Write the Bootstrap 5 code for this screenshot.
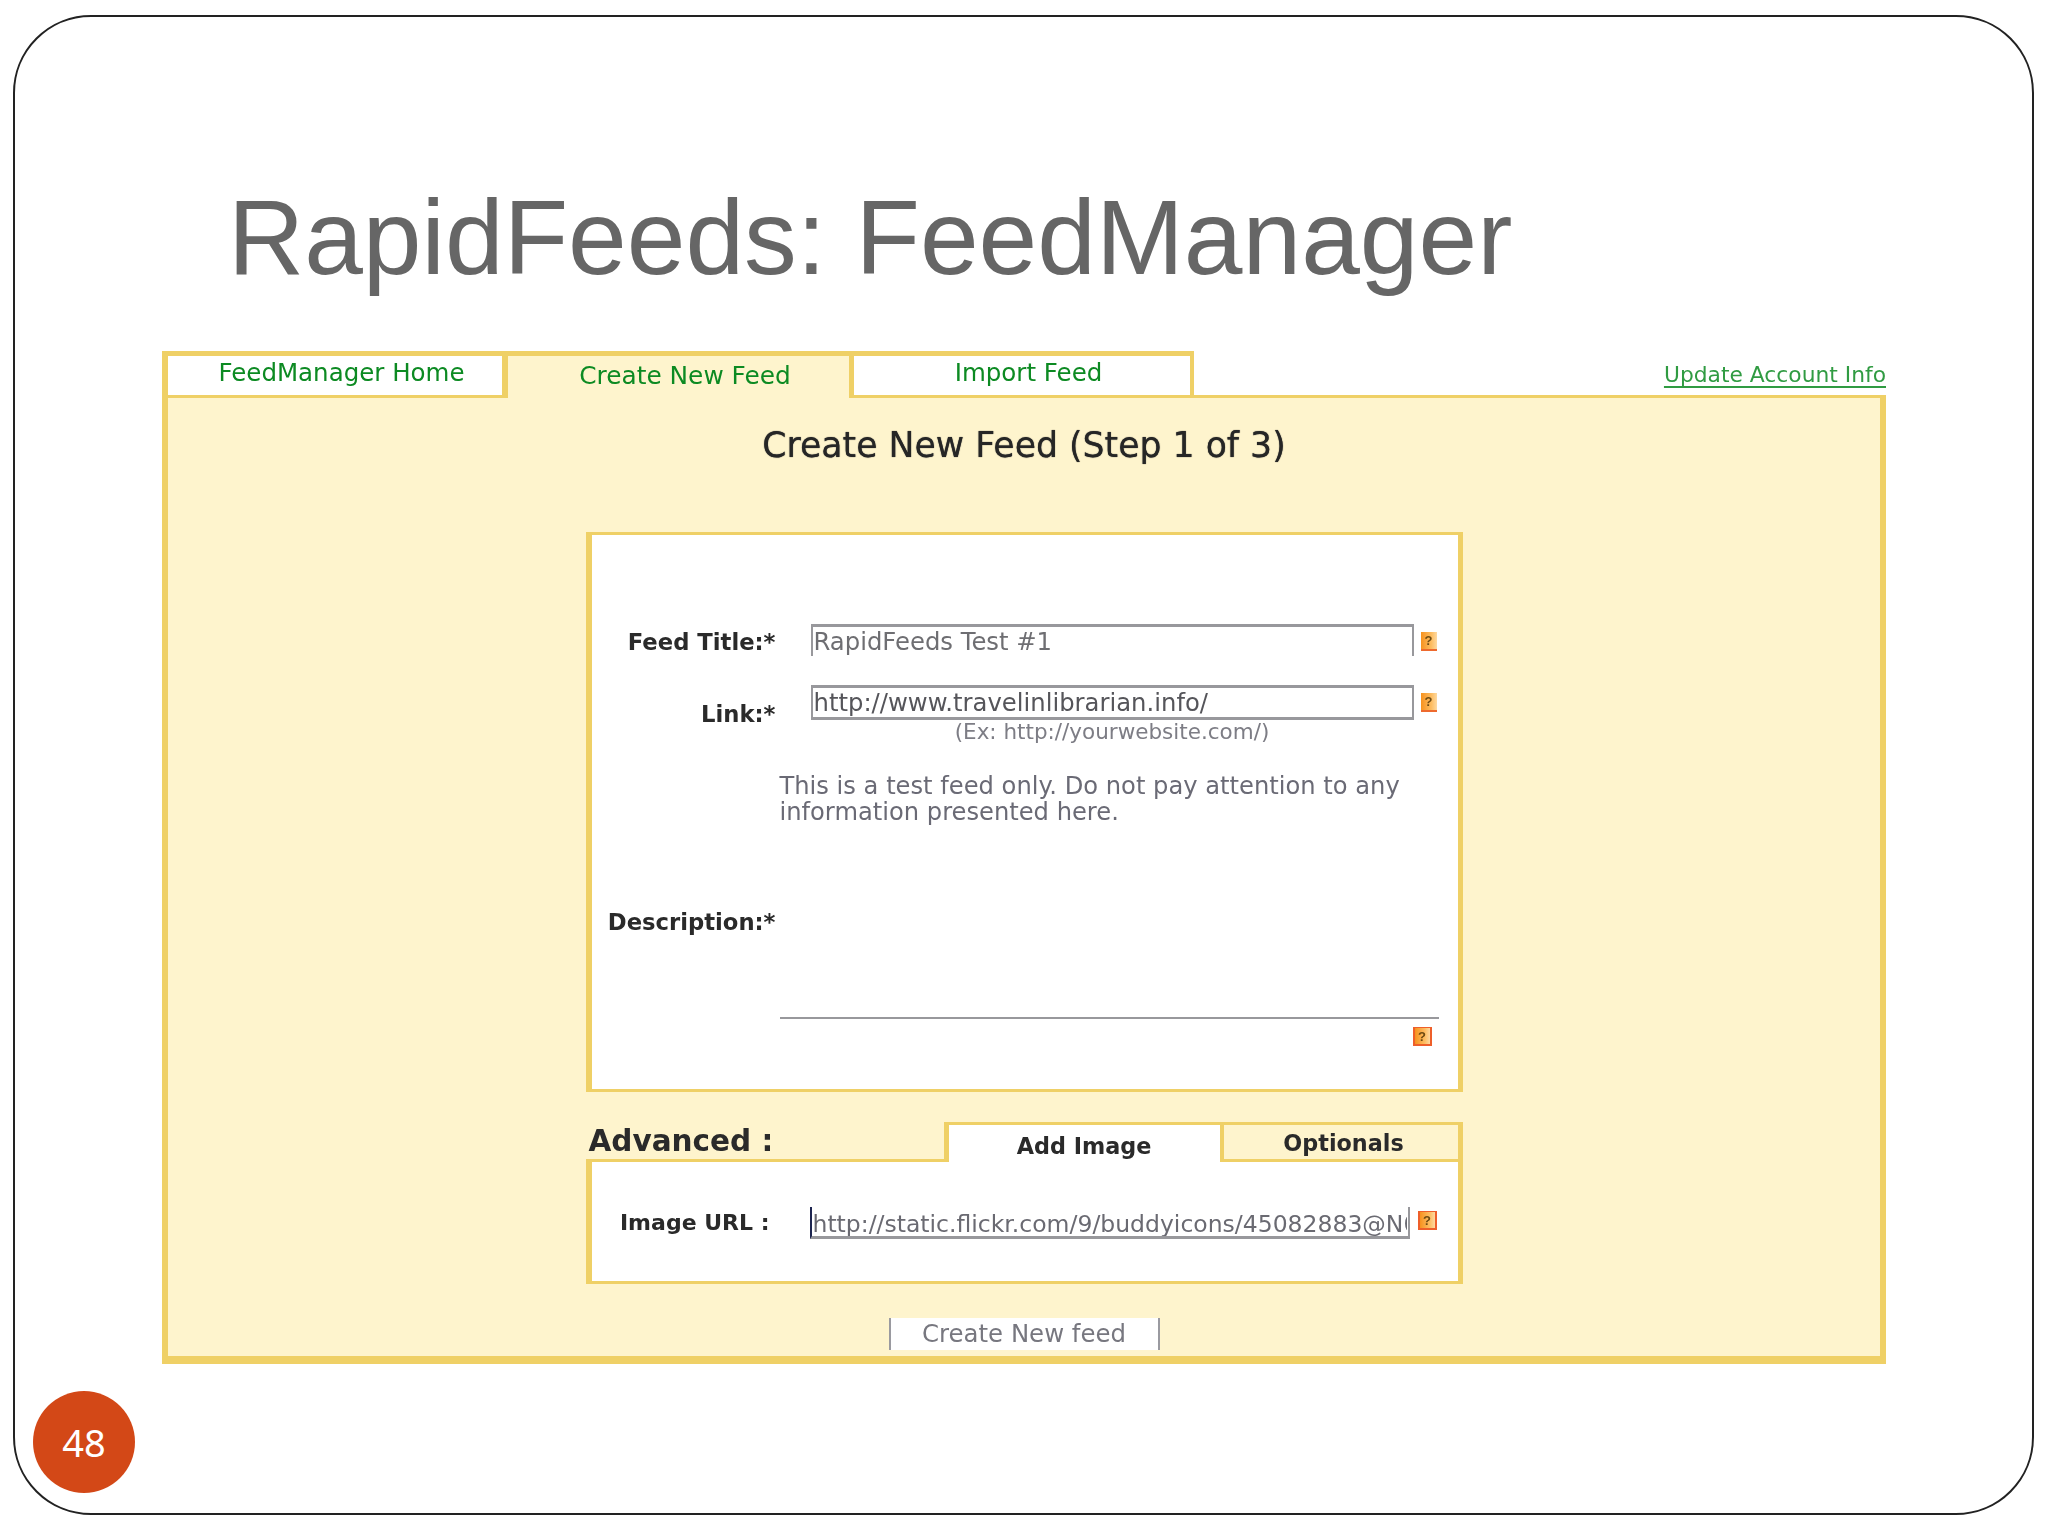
<!DOCTYPE html>
<html lang="en">
<head>
<meta charset="utf-8">
<title>RapidFeeds: FeedManager</title>
<link href="https://cdn.jsdelivr.net/npm/bootstrap@5.3.0/dist/css/bootstrap.min.css" rel="stylesheet">
<style>
:root{--gold:#efd066;--cream:#fef4cd;--fld:#98989c;--grn:#0c8a22}
html,body{background:#fff}
body{margin:0;font-family:"DejaVu Sans",sans-serif}
.slide-frame{position:relative;width:2021px;height:1500px;margin:15px 0 0 13px;border:2px solid #222;border-radius:78px;padding-top:160px;background:#fff}
.slide-title{font:400 105.5px/120px "Liberation Sans",sans-serif;color:#666;margin:0 0 54px 213px}
.slide-num{position:absolute;left:18px;bottom:20px;width:102px;height:102px;border-radius:50%;background:#d34817;color:#fff;font:400 38px/1 "Noto Sans",sans-serif}
.shot{width:1724px;margin-left:147px}
.soft{filter:blur(.7px)}
.tabrow{height:47px}
.feed-tab{border:solid var(--gold);border-width:5px 6px 3px;background:#fff;color:var(--grn);font-size:24.5px;line-height:1;padding-top:5px;padding-left:13px;text-align:center}
.feed-tab.t1{width:346px}
.feed-tab.t2{width:341px;font-size:24.8px;background:var(--cream);border-width:5px 0 0;border-bottom:3px solid var(--cream);padding-top:8px}
.feed-tab.t3{width:345px;border-width:5px 4px 3px 5px}
.tab-rest{border-bottom:3px solid var(--gold)}
.acct{color:var(--grn);font-size:21.8px;line-height:1;text-decoration:underline;text-decoration-thickness:2px;text-underline-offset:4px;padding-bottom:9px;opacity:.85}
.panel-body{height:966px;background:var(--cream);border:solid var(--gold);border-width:0 6px 8px;padding-top:27px}
.step-head{font-size:34.7px;line-height:40px;color:#262626;font-weight:400;text-align:center;margin:0 0 67px;text-shadow:0 0 1px #262626}
.inner-w{width:877px}
.main-box{height:560px;background:#fff;border:solid var(--gold);border-width:3px 5px 3px 6px;padding-top:89px}
.lbl{width:184px;text-align:right;font-weight:700;font-size:22.7px;line-height:26px;color:#2a2a2a;flex:none}
.lbl.first{padding-top:5px}
.lbl.second{padding-top:16px}
.lbl.third{padding-top:136px}
.fld{width:603px;height:32px;font:400 24.3px/26px "DejaVu Sans",sans-serif;color:#6e6e72;border:solid var(--fld);border-width:3px 2px 0;border-radius:0;padding:2px 1px;background:#fff;box-shadow:none;flex:none}
.fld.full{height:35px;border-width:3px 2px;color:#55555a}
.fld.url{width:600px;height:32px;font-size:23.5px;border-width:0 2px 3px;border-left-color:#1d2550;padding:4px 1px 0;color:#6a6a72}
.q-ico{display:inline-block;width:16px;height:19px;margin-left:7px;background:linear-gradient(90deg,#f7921e,#fdbd62 65%,#fed9a0);border-bottom:2px solid #ee6a2e;color:#6d4a12;font:700 13px/17px "Liberation Sans",sans-serif;text-align:center;flex:none}
.q-ico.red{width:19px;border:2px solid #ee5f2a;border-width:1px 2px 2px;margin-left:8px}
.two-col{padding-left:31px}
.row-gap{margin-top:29px}
.row-gap2{margin-top:30px}
.hint{font-size:21.5px;line-height:22px;color:#7d7d85;text-align:center;width:603px;margin-top:1px}
.note{font-size:24.2px;line-height:26px;color:#6a6a75;margin:0;width:659px}
.note-col{width:659px}
.rule-line{height:2px;background:var(--fld);margin-top:192px}
.ico-line{padding-right:7px}
.adv-row{height:40px;margin-top:30px}
.adv-head{font-weight:700;font-size:29.5px;line-height:36px;color:#2a2a2a;border-bottom:3px solid var(--gold);padding:1px 0 0 3px}
.sub-tab{font-weight:700;font-size:22.3px;line-height:1;color:#2a2a2a;text-align:center;border:solid var(--gold)}
.sub-tab.on{width:276px;background:#fff;border-width:3px 0 0 5px;padding-top:10px}
.sub-tab.off{width:243px;border-width:3px 5px 3px 4px;padding:7px 0 0 6px}
.adv-box{height:122px;background:#fff;border:solid var(--gold);border-width:0 5px 3px 6px;padding-top:45px}
.lbl-img{width:178px;margin-top:3px;margin-right:40px;font-size:22px;text-align:right;font-weight:700;line-height:26px;color:#2a2a2a;flex:none}
.go-btn{display:block;width:271px;height:32px;margin:34px auto 0;background:#fff;border:solid #9a9aa0;border-width:0 2px;border-radius:0;padding:0;color:#77777f;font:400 24.4px/32px "DejaVu Sans",sans-serif}
.go-btn:hover{background:#fff;color:#77777f;border-color:#9a9aa0}
</style>
</head>
<body>
<div class="slide-frame">
  <h1 class="slide-title">RapidFeeds: FeedManager</h1>

  <div class="shot">
    <div class="tabrow d-flex">
      <div class="feed-tab t1"><span class="soft d-inline-block">FeedManager Home</span></div>
      <div class="feed-tab t2"><span class="soft d-inline-block">Create New Feed</span></div>
      <div class="feed-tab t3"><span class="soft d-inline-block">Import Feed</span></div>
      <div class="tab-rest flex-grow-1 d-flex justify-content-end align-items-end">
        <a class="acct soft" href="#">Update Account Info</a>
      </div>
    </div>

    <div class="panel-body">
      <h2 class="step-head soft">Create New Feed (Step 1 of 3)</h2>

      <div class="inner-w mx-auto">
        <div class="main-box">
          <div class="d-flex">
            <div class="lbl first soft">Feed Title:*</div>
            <div class="d-flex ms-1 two-col">
              <input class="form-control fld soft" value="RapidFeeds Test #1">
              <span class="q-ico soft mt-2">?</span>
            </div>
          </div>
          <div class="d-flex row-gap">
            <div class="lbl second soft">Link:*</div>
            <div class="ms-1 two-col">
              <div class="d-flex">
                <input class="form-control fld full soft" value="http://www.travelinlibrarian.info/">
                <span class="q-ico soft mt-2">?</span>
              </div>
              <div class="hint soft">(Ex: http://yourwebsite.com/)</div>
            </div>
          </div>
          <div class="d-flex row-gap2">
            <div class="lbl third soft">Description:*</div>
            <div class="ms-1 note-col">
              <p class="note soft">This is a test feed only. Do not pay attention to any information presented here.</p>
              <div class="rule-line soft"></div>
              <div class="d-flex justify-content-end ico-line mt-2"><span class="q-ico red soft">?</span></div>
            </div>
          </div>
        </div>

        <div class="adv-row d-flex">
          <div class="adv-head flex-grow-1"><span class="soft d-inline-block">Advanced :</span></div>
          <div class="sub-tab on"><span class="soft d-inline-block">Add Image</span></div>
          <div class="sub-tab off"><span class="soft d-inline-block">Optionals</span></div>
        </div>
        <div class="adv-box d-flex">
          <div class="lbl-img soft">Image URL :</div>
          <input class="form-control fld url soft" value="http://static.flickr.com/9/buddyicons/45082883@N00.jpg">
          <span class="q-ico red soft mt-1">?</span>
        </div>

        <button type="button" class="btn go-btn"><span class="soft d-inline-block">Create New feed</span></button>
      </div>
    </div>
  </div>

  <div class="slide-num d-flex align-items-center justify-content-center">48</div>
</div>
<script src="https://cdn.jsdelivr.net/npm/bootstrap@5.3.0/dist/js/bootstrap.bundle.min.js"></script>
</body>
</html>
